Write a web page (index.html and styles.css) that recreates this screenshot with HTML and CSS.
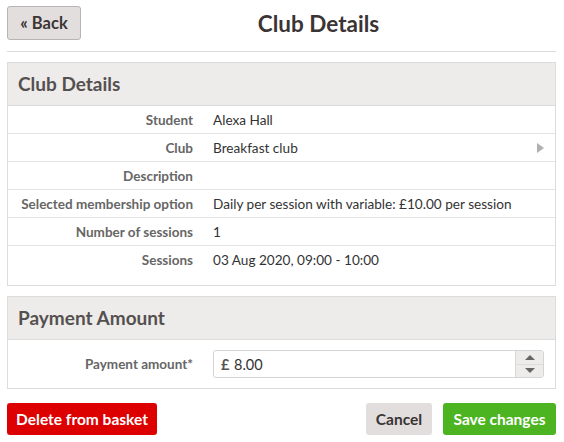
FILE: index.html
```html
<!DOCTYPE html>
<html>
<head>
<meta charset="utf-8">
<link rel="stylesheet" href="styles.css">
</head>
<body>
<div class="page">
  <div class="topbar">
    <button class="btn btn-back">« Back</button>
    <h1 class="page-title">Club Details</h1>
  </div>
  <hr class="rule">
  <section class="card">
    <div class="card-head">Club Details</div>
    <div class="card-body details">
      <div class="row"><div class="label">Student</div><div class="value">Alexa Hall</div></div>
      <div class="row"><div class="label">Club</div><div class="value value-link">Breakfast club<span class="arrow"></span></div></div>
      <div class="row"><div class="label">Description</div><div class="value"></div></div>
      <div class="row"><div class="label">Selected membership option</div><div class="value">Daily per session with variable: £10.00 per session</div></div>
      <div class="row"><div class="label">Number of sessions</div><div class="value">1</div></div>
      <div class="row last"><div class="label">Sessions</div><div class="value">03 Aug 2020, 09:00 - 10:00</div></div>
    </div>
  </section>
  <section class="card">
    <div class="card-head">Payment Amount</div>
    <div class="card-body payment">
      <div class="label">Payment amount*</div>
      <div class="input">
        <span class="currency">£</span>
        <span class="amount">8.00</span>
        <span class="spinner"><span class="up"></span><span class="down"></span></span>
      </div>
    </div>
  </section>
  <div class="actions">
    <button class="btn btn-danger">Delete from basket</button>
    <div class="actions-right">
      <button class="btn btn-cancel">Cancel</button>
      <button class="btn btn-save">Save changes</button>
    </div>
  </div>
</div>
</body>
</html>
```
FILE: styles.css
```css
html, body {
  margin: 0;
  padding: 0;
  background: #fff;
}
body {
  font-family: Lato, "Open Sans", sans-serif;
  color: #333;
}
.page {
  padding: 6px 8px 0 7px;
}
.topbar {
  display: flex;
  align-items: center;
}
.btn {
  font-family: Lato, sans-serif;
  font-weight: bold;
  font-size: 15.5px;
  border-radius: 3px;
  border: 0;
  height: 32px;
  padding: 0;
  white-space: nowrap;
  cursor: pointer;
}
.btn-back {
  height: 34px;
  width: 74px;
  background: #e2dedd;
  border: 1px solid #b8b4b3;
  color: #3a3434;
  font-size: 16.5px;
}
.page-title {
  flex: 1;
  text-align: center;
  margin: 0;
  font-size: 22.5px;
  font-weight: bold;
  color: #3a3434;
}
.rule {
  border: 0;
  border-top: 1px solid #dcdcdc;
  margin: 11px 0 10px;
}
.card {
  border: 1px solid #dcdcdc;
  margin-bottom: 10px;
}
.card-head {
  background: #eeecea;
  height: 42px;
  line-height: 42px;
  padding-left: 10px;
  font-size: 19px;
  font-weight: bold;
  color: #555050;
  border-bottom: 1px solid #dcdcdc;
}
.details {
  padding-bottom: 11px;
}
.row {
  display: grid;
  grid-template-columns: 185px 1fr;
  column-gap: 20px;
  height: 28px;
  box-sizing: border-box;
  align-items: center;
  border-bottom: 1px solid #e3e3e3;
  font-size: 13.6px;
}
.row.last {
  border-bottom: 0;
}
.label {
  text-align: right;
  font-weight: bold;
  color: #666;
  font-size: 13.5px;
}
.value {
  color: #333;
  display: flex;
  align-items: center;
}
.value-link {
  justify-content: space-between;
  padding-right: 11px;
}
.arrow {
  width: 0;
  height: 0;
  border-left: 7px solid #b0b0b0;
  border-top: 5px solid transparent;
  border-bottom: 5px solid transparent;
}
.payment {
  display: grid;
  grid-template-columns: 185px 1fr;
  column-gap: 20px;
  align-items: center;
  padding: 10px 11px 10px 0;
}
.input {
  display: flex;
  align-items: center;
  height: 28px;
  border: 1px solid #d4d4d4;
  border-radius: 3px;
  font-size: 14.5px;
  color: #333;
  box-sizing: border-box;
}
.currency {
  font-weight: bold;
  color: #555;
  padding-left: 7px;
  width: 13px;
}
.amount {
  flex: 1;
}
.spinner {
  align-self: stretch;
  width: 27px;
  background: #eeecea;
  border-left: 1px solid #d8d8d8;
  display: flex;
  flex-direction: column;
  border-radius: 0 3px 3px 0;
}
.spinner .up, .spinner .down {
  flex: 1;
  display: flex;
  align-items: center;
  justify-content: center;
}
.spinner .up {
  border-bottom: 1px solid #dcdcdc;
}
.spinner .up::before {
  content: "";
  border-left: 5px solid transparent;
  border-right: 5px solid transparent;
  border-bottom: 5px solid #666;
}
.spinner .down::before {
  content: "";
  border-left: 5px solid transparent;
  border-right: 5px solid transparent;
  border-top: 5px solid #666;
}
.actions {
  display: flex;
  justify-content: space-between;
  margin-top: 14px;
}
.actions-right {
  display: flex;
  gap: 11px;
}
.btn-danger {
  background: #dd0000;
  color: #fff;
  width: 150px;
}
.btn-cancel {
  background: #e2dedd;
  color: #3a3434;
  width: 66px;
}
.btn-save {
  background: #4cb421;
  color: #fff;
  width: 113px;
}
```
